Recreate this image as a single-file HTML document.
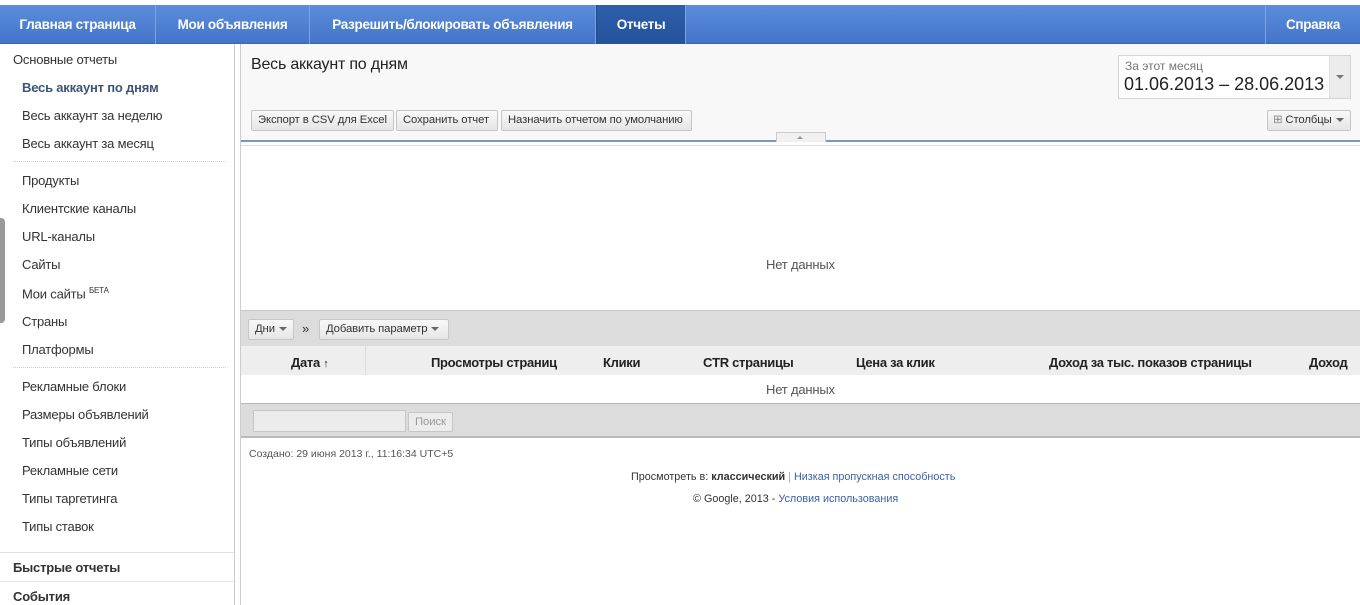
<!DOCTYPE html>
<html><head><meta charset="utf-8"><style>
*{margin:0;padding:0;box-sizing:border-box}
body{width:1360px;height:605px;overflow:hidden;background:#fff;font-family:"Liberation Sans",Arial,sans-serif;color:#222;position:relative}
.a{position:absolute;white-space:nowrap}
.nav{position:absolute;left:0;top:5px;width:1360px;height:39px;background:linear-gradient(#5b8ddc,#4474c8);border-bottom:1px solid #3a64ad}
.nav .it{position:absolute;top:0;height:39px;line-height:39px;color:#fff;font-weight:bold;font-size:13.5px;letter-spacing:-0.3px;text-align:center;border-right:1px solid #7ba3e4}
.nav .act{background:linear-gradient(#2f5eab,#24529b);border-left:1px solid #1f4a8f}
.sb{font-size:13px;letter-spacing:-0.2px;color:#333}
.sep{position:absolute;left:13px;width:213px;border-top:1px dotted #ccc}
.btn{position:absolute;height:21px;border:1px solid #c6c6c6;border-radius:2px;background:linear-gradient(#f8f8f8,#e6e6e6);font-size:11.3px;line-height:19px;padding:0 6px;color:#333;letter-spacing:-0.1px;white-space:nowrap}
.th{position:absolute;top:355px;font-size:13px;font-weight:bold;color:#222;letter-spacing:-0.3px;white-space:nowrap}
.tri{display:inline-block;width:0;height:0;border-left:4px solid transparent;border-right:4px solid transparent;border-top:4px solid #666;vertical-align:middle;margin-left:4px}
</style></head><body>
<div class="nav">
<div class="it" style="left:0;width:156px">Главная страница</div>
<div class="it" style="left:156px;width:154px">Мои объявления</div>
<div class="it" style="left:310px;width:286px">Разрешить/блокировать объявления</div>
<div class="it act" style="left:596px;width:90px">Отчеты</div>
<div class="it" style="left:1265px;width:95px;border-right:none;border-left:1px solid #7ba3e4">Справка</div>
</div>
<div style="position:absolute;left:234px;top:44px;width:1px;height:561px;background:#ccc"></div>
<div style="position:absolute;left:240px;top:44px;width:1px;height:561px;background:#ccc"></div>
<div style="position:absolute;left:0;top:218px;width:5px;height:105px;background:#999;border-radius:0 4px 4px 0"></div>
<div class="a sb" style="left:13px;top:52px">Основные отчеты</div>
<div class="a sb" style="left:22px;top:80px;font-weight:bold;color:#3d5478">Весь аккаунт по дням</div>
<div class="a sb" style="left:22px;top:108px">Весь аккаунт за неделю</div>
<div class="a sb" style="left:22px;top:136px">Весь аккаунт за месяц</div>
<div class="sep" style="top:161px"></div>
<div class="a sb" style="left:22px;top:173px">Продукты</div>
<div class="a sb" style="left:22px;top:201px">Клиентские каналы</div>
<div class="a sb" style="left:22px;top:229px">URL-каналы</div>
<div class="a sb" style="left:22px;top:257px">Сайты</div>
<div class="a sb" style="left:22px;top:286px">Мои сайты <sup style="font-size:8px">БЕТА</sup></div>
<div class="a sb" style="left:22px;top:314px">Страны</div>
<div class="a sb" style="left:22px;top:342px">Платформы</div>
<div class="sep" style="top:367px"></div>
<div class="a sb" style="left:22px;top:379px">Рекламные блоки</div>
<div class="a sb" style="left:22px;top:407px">Размеры объявлений</div>
<div class="a sb" style="left:22px;top:435px">Типы объявлений</div>
<div class="a sb" style="left:22px;top:463px">Рекламные сети</div>
<div class="a sb" style="left:22px;top:491px">Типы таргетинга</div>
<div class="a sb" style="left:22px;top:519px">Типы ставок</div>
<div style="position:absolute;left:0;top:552px;width:234px;border-top:1px solid #e2e2e2"></div>
<div class="a sb" style="left:13px;top:560px;font-weight:bold">Быстрые отчеты</div>
<div style="position:absolute;left:0;top:581px;width:234px;border-top:1px solid #e2e2e2"></div>
<div class="a sb" style="left:13px;top:589px;font-weight:bold">События</div>
<div style="position:absolute;left:241px;top:44px;width:1119px;height:97px;background:#f8f8f8"></div>
<div class="a" style="left:251px;top:56px;font-size:16px;color:#222;letter-spacing:-0.2px">Весь аккаунт по дням</div>
<div style="position:absolute;left:1118px;top:55px;width:233px;height:44px;border:1px solid #d4d4d4;background:#fff"></div>
<div style="position:absolute;left:1329px;top:56px;width:21px;height:42px;background:#ececec;border-left:1px solid #ddd"></div>
<div class="a" style="left:1336px;top:75px;width:0;height:0;border-left:4px solid transparent;border-right:4px solid transparent;border-top:4px solid #777"></div>
<div class="a" style="left:1125px;top:59px;font-size:12px;color:#777">За этот месяц</div>
<div class="a" style="left:1124px;top:74px;font-size:18px;color:#222">01.06.2013 – 28.06.2013</div>
<div class="btn" style="left:251px;top:110px;width:143px">Экспорт в CSV для Excel</div>
<div class="btn" style="left:396px;top:110px;width:102px">Сохранить отчет</div>
<div class="btn" style="left:501px;top:110px;width:191px">Назначить отчетом по умолчанию</div>
<div class="btn" style="left:1267px;top:110px;width:84px;padding:0 5px"><span style="color:#888">⊞</span> Столбцы<span class="tri"></span></div>
<div style="position:absolute;left:241px;top:140px;width:1119px;height:2px;background:#7d96bf"></div>
<div style="position:absolute;left:776px;top:132px;width:50px;height:10px;background:#f1f1f1;border:1px solid #ccc;border-bottom:none"></div>
<div class="a" style="left:797px;top:136px;width:0;height:0;border-left:3px solid transparent;border-right:3px solid transparent;border-bottom:3px solid #999"></div>
<div style="position:absolute;left:241px;top:145px;width:1119px;border-top:1px solid #ddd"></div>
<div class="a" style="left:766px;top:257px;font-size:13px;color:#555;letter-spacing:-0.2px">Нет данных</div>
<div style="position:absolute;left:241px;top:310px;width:1119px;height:36px;background:#dcdcdc;border-top:1px solid #c8c8c8"></div>
<div class="btn" style="left:248px;top:319px">Дни<span class="tri"></span></div>
<div class="a" style="left:302px;top:321px;font-size:13px;color:#333">»</div>
<div class="btn" style="left:319px;top:319px;width:130px">Добавить параметр<span class="tri"></span></div>
<div style="position:absolute;left:241px;top:346px;width:1119px;height:29px;background:#eeeeee"></div>
<div style="position:absolute;left:365px;top:346px;width:1px;height:29px;background:#ddd"></div>
<div class="th" style="left:291px">Дата <span style="font-size:11px">↑</span></div>
<div class="th" style="left:431px">Просмотры страниц</div>
<div class="th" style="left:603px">Клики</div>
<div class="th" style="left:703px">CTR страницы</div>
<div class="th" style="left:856px">Цена за клик</div>
<div class="th" style="left:1049px">Доход за тыс. показов страницы</div>
<div class="th" style="left:1309px">Доход</div>
<div class="a" style="left:766px;top:382px;font-size:13px;color:#555;letter-spacing:-0.2px">Нет данных</div>
<div style="position:absolute;left:241px;top:403px;width:1119px;height:35px;background:#dcdcdc;border-top:1px solid #b8b8b8;border-bottom:2px solid #bbb"></div>
<div style="position:absolute;left:253px;top:410px;width:153px;height:22px;background:#ececec;border:1px solid #c6c6c6"></div>
<div class="btn" style="left:408px;top:412px;height:20px;line-height:18px;color:#999;background:#ececec">Поиск</div>
<div class="a" style="left:249px;top:448px;font-size:10.5px;color:#555">Создано: 29 июня 2013 г., 11:16:34 UTC+5</div>
<div class="a" style="left:631px;top:471px;font-size:10.8px;color:#333">Просмотреть в: <b>классический</b> <span style="color:#aaa">|</span> <span style="color:#3a62a8">Низкая пропускная способность</span></div>
<div class="a" style="left:693px;top:493px;font-size:10.8px;color:#333">© Google, 2013 - <span style="color:#3a62a8">Условия использования</span></div>
</body></html>
